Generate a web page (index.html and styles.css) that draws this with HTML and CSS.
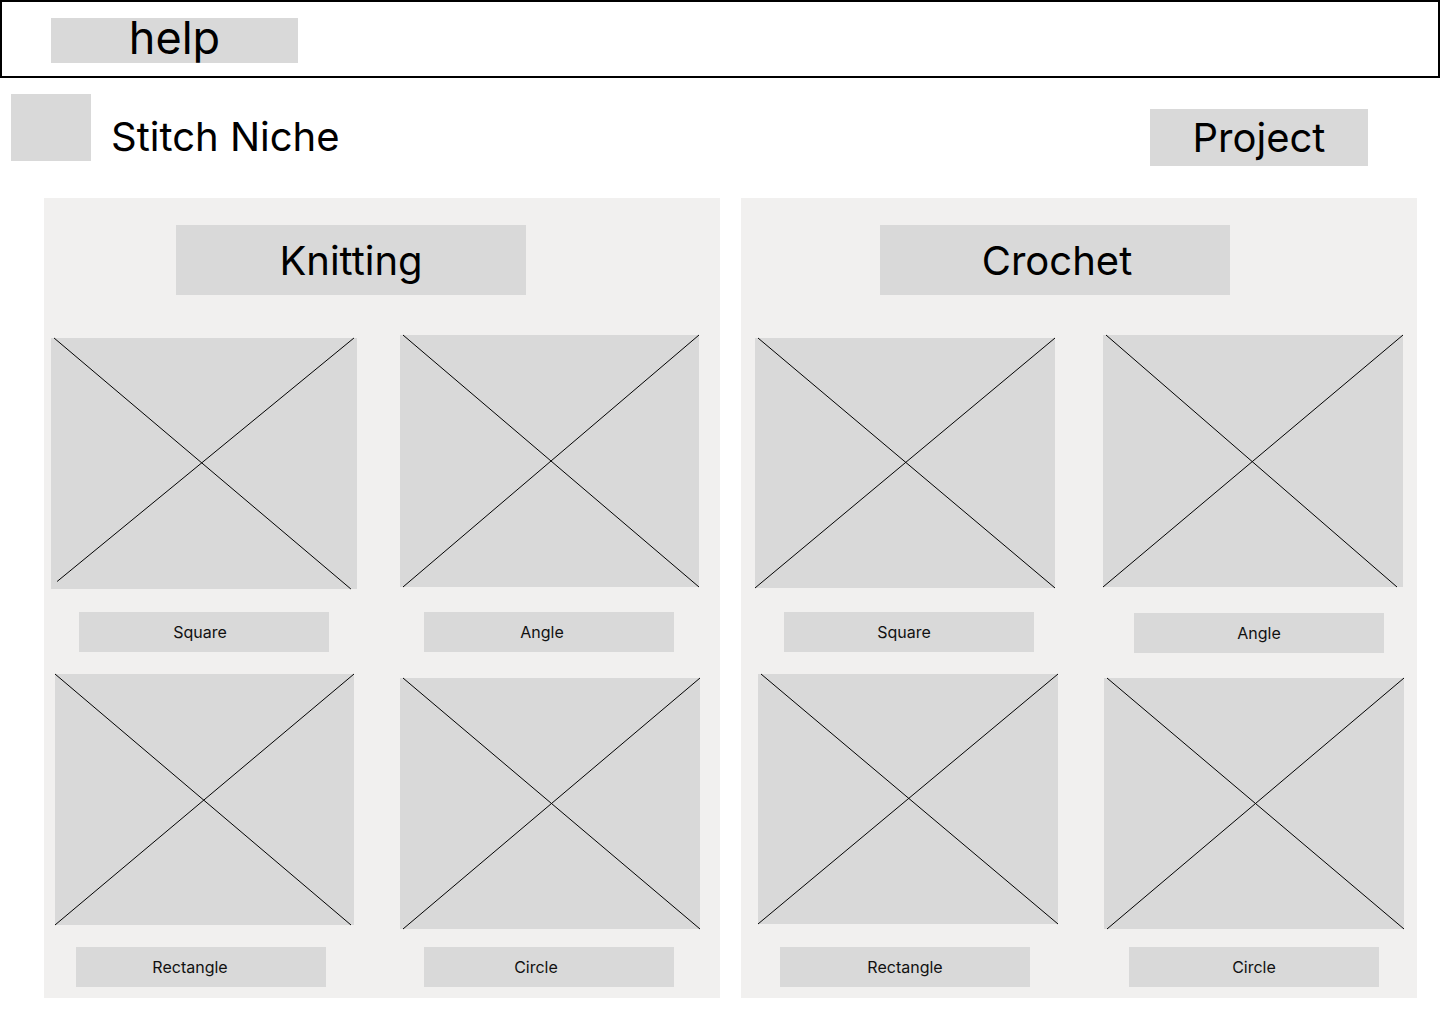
FILE: index.html
```html
<!DOCTYPE html>
<html lang="en">
<head>
    <meta charset="UTF-8">
    <title>Stitch Niche</title>
    <meta name="viewport" content="width=device-width, initial-scale=1.0">
    <link rel="stylesheet" href="styles.css">
</head>
<body>
    <header class="topbar">
        <div class="help">help</div>
    </header>

    <div class="brand-row">
        <div class="logo"></div>
        <div class="brand-name">Stitch Niche</div>
        <div class="project">Project</div>
    </div>

    <main class="panels">
        <section class="panel panel-knitting">
            <div class="panel-title">Knitting</div>
            <div class="tiles">
                <div class="tile">
                    <div class="thumb"><svg viewBox="0 0 100 100" preserveAspectRatio="none"><line x1="1" y1="0" x2="98" y2="100"/><line x1="99" y1="0" x2="2" y2="97"/></svg></div>
                    <div class="label">Square</div>
                </div>
                <div class="tile">
                    <div class="thumb"><svg viewBox="0 0 100 100" preserveAspectRatio="none"><line x1="1" y1="0" x2="100" y2="100"/><line x1="100" y1="0" x2="1" y2="100"/></svg></div>
                    <div class="label">Angle</div>
                </div>
                <div class="tile">
                    <div class="thumb"><svg viewBox="0 0 100 100" preserveAspectRatio="none"><line x1="0" y1="0" x2="99" y2="100"/><line x1="100" y1="0" x2="0" y2="100"/></svg></div>
                    <div class="label">Rectangle</div>
                </div>
                <div class="tile">
                    <div class="thumb"><svg viewBox="0 0 100 100" preserveAspectRatio="none"><line x1="1" y1="0" x2="100" y2="100"/><line x1="100" y1="0" x2="1" y2="100"/></svg></div>
                    <div class="label">Circle</div>
                </div>
            </div>
        </section>

        <section class="panel panel-crochet">
            <div class="panel-title">Crochet</div>
            <div class="tiles">
                <div class="tile">
                    <div class="thumb"><svg viewBox="0 0 100 100" preserveAspectRatio="none"><line x1="1" y1="0" x2="100" y2="100"/><line x1="100" y1="0" x2="0" y2="100"/></svg></div>
                    <div class="label">Square</div>
                </div>
                <div class="tile">
                    <div class="thumb"><svg viewBox="0 0 100 100" preserveAspectRatio="none"><line x1="1" y1="0" x2="98" y2="100"/><line x1="100" y1="0" x2="0" y2="100"/></svg></div>
                    <div class="label">Angle</div>
                </div>
                <div class="tile">
                    <div class="thumb"><svg viewBox="0 0 100 100" preserveAspectRatio="none"><line x1="1" y1="0" x2="100" y2="100"/><line x1="100" y1="0" x2="0" y2="100"/></svg></div>
                    <div class="label">Rectangle</div>
                </div>
                <div class="tile">
                    <div class="thumb"><svg viewBox="0 0 100 100" preserveAspectRatio="none"><line x1="1" y1="0" x2="100" y2="100"/><line x1="100" y1="0" x2="1" y2="100"/></svg></div>
                    <div class="label">Circle</div>
                </div>
            </div>
        </section>
    </main>
</body>
</html>
```

FILE: styles.css
```css
* {
    box-sizing: border-box;
}

body {
    font-family: "Inter", "Liberation Sans", sans-serif;
    background-color: #fff;
    color: #000;
    margin: 0;
    padding: 0;
    width: 1440px;
}

.topbar {
    height: 78px;
    border: 2px solid #000;
    padding: 16px 0 0 49px;
}

.help {
    width: 247px;
    height: 45px;
    background: #d9d9d9;
    font-size: 45px;
    line-height: 40px;
    text-align: center;
}

.brand-row {
    display: flex;
    align-items: flex-start;
    margin-top: 16px;
    padding-left: 11px;
}

.logo {
    width: 80px;
    height: 67px;
    background: #d9d9d9;
}

.brand-name {
    font-size: 40px;
    line-height: 48px;
    margin: 19px 0 0 20px;
}

.project {
    margin: 15px 72px 0 auto;
    width: 218px;
    height: 57px;
    background: #d9d9d9;
    font-size: 40px;
    line-height: 57px;
    text-align: center;
}

.panels {
    display: flex;
    gap: 21px;
    margin-top: 32px;
    padding-left: 44px;
}

.panel {
    width: 676px;
    height: 800px;
    background: #f1f0ef;
    padding-top: 27px;
}

.panel-title {
    width: 350px;
    height: 70px;
    background: #d9d9d9;
    font-size: 40px;
    line-height: 72px;
    text-align: center;
    margin-left: 132px;
}

.panel-crochet .panel-title {
    margin-left: 139px;
    padding-left: 4px;
}

.tiles {
    display: grid;
    grid-template-columns: 356px 320px;
    align-items: start;
    margin-top: 40px;
}

.panel-crochet .tiles {
    grid-template-columns: 362px 314px;
}

.tile {
    display: flex;
    flex-direction: column;
    align-items: flex-start;
}

.thumb {
    width: 300px;
    height: 251px;
    background: #d9d9d9;
}

.thumb svg {
    display: block;
    width: 100%;
    height: 100%;
    overflow: visible;
}

.thumb line {
    stroke: #000;
    stroke-width: 1;
    vector-effect: non-scaling-stroke;
}

.label {
    width: 250px;
    height: 40px;
    background: #d9d9d9;
    font-size: 16px;
    line-height: 40px;
    text-align: center;
    color: #111;
}

/* knitting tiles */
.panel-knitting .tile:nth-child(1) .thumb { margin: 3px 0 0 7px; width: 306px; }
.panel-knitting .tile:nth-child(1) .label { margin: 23px 0 0 35px; padding-right: 8px; }
.panel-knitting .tile:nth-child(2) .thumb { width: 299px; height: 252px; }
.panel-knitting .tile:nth-child(2) .label { margin: 25px 0 0 24px; padding-right: 14px; }
.panel-knitting .tile:nth-child(3) .thumb { margin: 22px 0 0 11px; width: 299px; }
.panel-knitting .tile:nth-child(3) .label { margin: 22px 0 0 32px; padding-right: 22px; }
.panel-knitting .tile:nth-child(4) .thumb { margin-top: 26px; }
.panel-knitting .tile:nth-child(4) .label { margin: 18px 0 0 24px; padding-right: 26px; }

/* crochet tiles */
.panel-crochet .tile:nth-child(1) .thumb { margin: 3px 0 0 14px; height: 250px; }
.panel-crochet .tile:nth-child(1) .label { margin: 24px 0 0 43px; padding-right: 10px; }
.panel-crochet .tile:nth-child(2) .thumb { height: 252px; }
.panel-crochet .tile:nth-child(2) .label { margin: 26px 0 0 31px; }
.panel-crochet .tile:nth-child(3) .thumb { margin: 21px 0 0 17px; height: 250px; }
.panel-crochet .tile:nth-child(3) .label { margin: 23px 0 0 39px; }
.panel-crochet .tile:nth-child(4) .thumb { margin: 25px 0 0 1px; }
.panel-crochet .tile:nth-child(4) .label { margin: 18px 0 0 26px; }
```
